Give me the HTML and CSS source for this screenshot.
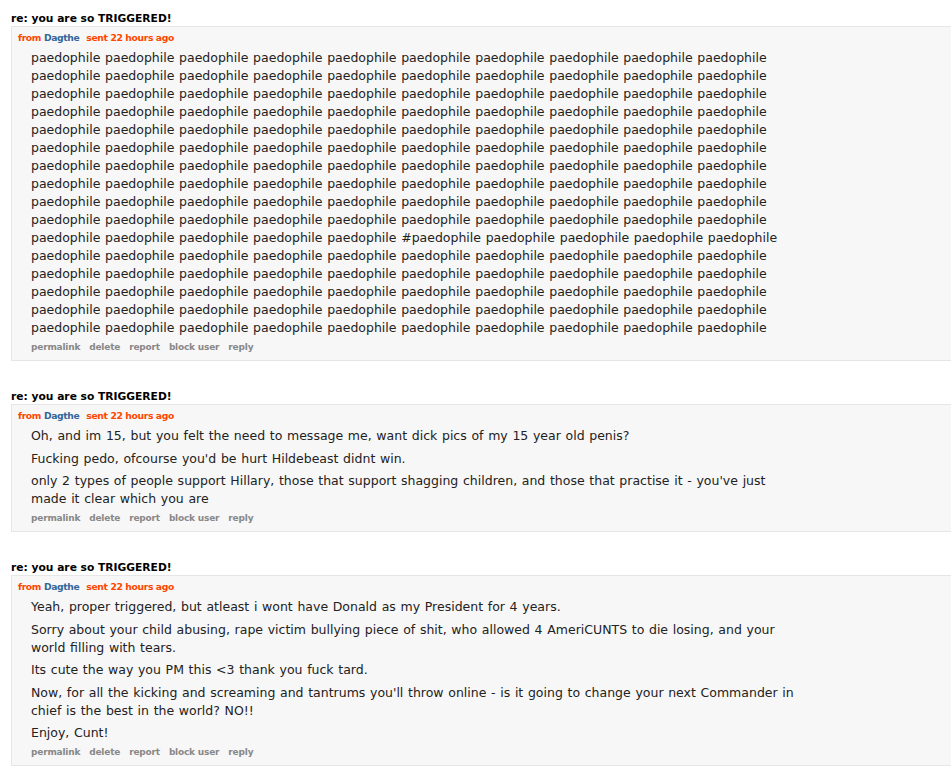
FILE: index.html
```html
<!DOCTYPE html>
<html>
<head>
<meta charset="utf-8">
<link rel="stylesheet" href="styles.css">
</head>
<body>
<div class="message">
  <div class="subject">re: you are so TRIGGERED!</div>
  <div class="entry">
    <div class="tagline"><span class="from">from <a class="author">Dagthe</a></span><span class="sent">sent 22 hours ago</span></div>
    <div class="md">
      <p>paedophile paedophile paedophile paedophile paedophile paedophile paedophile paedophile paedophile paedophile
paedophile paedophile paedophile paedophile paedophile paedophile paedophile paedophile paedophile paedophile
paedophile paedophile paedophile paedophile paedophile paedophile paedophile paedophile paedophile paedophile
paedophile paedophile paedophile paedophile paedophile paedophile paedophile paedophile paedophile paedophile
paedophile paedophile paedophile paedophile paedophile paedophile paedophile paedophile paedophile paedophile
paedophile paedophile paedophile paedophile paedophile paedophile paedophile paedophile paedophile paedophile
paedophile paedophile paedophile paedophile paedophile paedophile paedophile paedophile paedophile paedophile
paedophile paedophile paedophile paedophile paedophile paedophile paedophile paedophile paedophile paedophile
paedophile paedophile paedophile paedophile paedophile paedophile paedophile paedophile paedophile paedophile
paedophile paedophile paedophile paedophile paedophile paedophile paedophile paedophile paedophile paedophile
paedophile paedophile paedophile paedophile paedophile #paedophile paedophile paedophile paedophile paedophile
paedophile paedophile paedophile paedophile paedophile paedophile paedophile paedophile paedophile paedophile
paedophile paedophile paedophile paedophile paedophile paedophile paedophile paedophile paedophile paedophile
paedophile paedophile paedophile paedophile paedophile paedophile paedophile paedophile paedophile paedophile
paedophile paedophile paedophile paedophile paedophile paedophile paedophile paedophile paedophile paedophile
paedophile paedophile paedophile paedophile paedophile paedophile paedophile paedophile paedophile paedophile</p>
    </div>
    <ul class="flat-list">
      <li>permalink</li><li>delete</li><li>report</li><li>block user</li><li>reply</li>
    </ul>
  </div>
</div>

<div class="message">
  <div class="subject">re: you are so TRIGGERED!</div>
  <div class="entry">
    <div class="tagline"><span class="from">from <a class="author">Dagthe</a></span><span class="sent">sent 22 hours ago</span></div>
    <div class="md">
      <p>Oh, and im 15, but you felt the need to message me, want dick pics of my 15 year old penis?</p>
      <p>Fucking pedo, ofcourse you'd be hurt Hildebeast didnt win.</p>
      <p>only 2 types of people support Hillary, those that support shagging children, and those that practise it - you've just made it clear which you are</p>
    </div>
    <ul class="flat-list">
      <li>permalink</li><li>delete</li><li>report</li><li>block user</li><li>reply</li>
    </ul>
  </div>
</div>

<div class="message">
  <div class="subject">re: you are so TRIGGERED!</div>
  <div class="entry">
    <div class="tagline"><span class="from">from <a class="author">Dagthe</a></span><span class="sent">sent 22 hours ago</span></div>
    <div class="md">
      <p>Yeah, proper triggered, but atleast i wont have Donald as my President for 4 years.</p>
      <p>Sorry about your child abusing, rape victim bullying piece of shit, who allowed 4 AmeriCUNTS to die losing, and your world filling with tears.</p>
      <p>Its cute the way you PM this &lt;3 thank you fuck tard.</p>
      <p>Now, for all the kicking and screaming and tantrums you'll throw online - is it going to change your next Commander in chief is the best in the world? NO!!</p>
      <p>Enjoy, Cunt!</p>
    </div>
    <ul class="flat-list">
      <li>permalink</li><li>delete</li><li>report</li><li>block user</li><li>reply</li>
    </ul>
  </div>
</div>
</body>
</html>
```

FILE: styles.css
```css
html, body {
  background: #ffffff;
}
body {
  margin: 0;
  padding: 12px 0 0 11px;
  font-family: "DejaVu Sans", Verdana, sans-serif;
  color: #222222;
}
.message {
  margin-bottom: 29px;
}
.subject {
  font-size: 10.7px;
  font-weight: bold;
  line-height: 14px;
  color: #000000;
}
.entry {
  background: #f7f7f7;
  border: 1px solid #e6e6e6;
  border-right: none;
  padding: 4px 0 6px 6px;
}
.tagline {
  font-size: 9.2px;
  font-weight: bold;
  line-height: 14px;
  letter-spacing: -0.35px;
  color: #ff4500;
}
.author {
  color: #336699;
}
.sent {
  margin-left: 7px;
}
.md {
  margin: 4px 0 0 13px;
  max-width: 768px;
  font-size: 12.5px;
  line-height: 18px;
  word-spacing: 0.7px;
  color: #222222;
}
.md p {
  margin: 0 0 4.5px 0;
}
.md p:last-child {
  margin-bottom: 0;
}
.flat-list {
  list-style: none;
  margin: 3px 0 0 13px;
  padding: 0;
  display: flex;
  gap: 9px;
  font-size: 9px;
  font-weight: bold;
  line-height: 14px;
  letter-spacing: -0.2px;
  color: #888888;
}
```
